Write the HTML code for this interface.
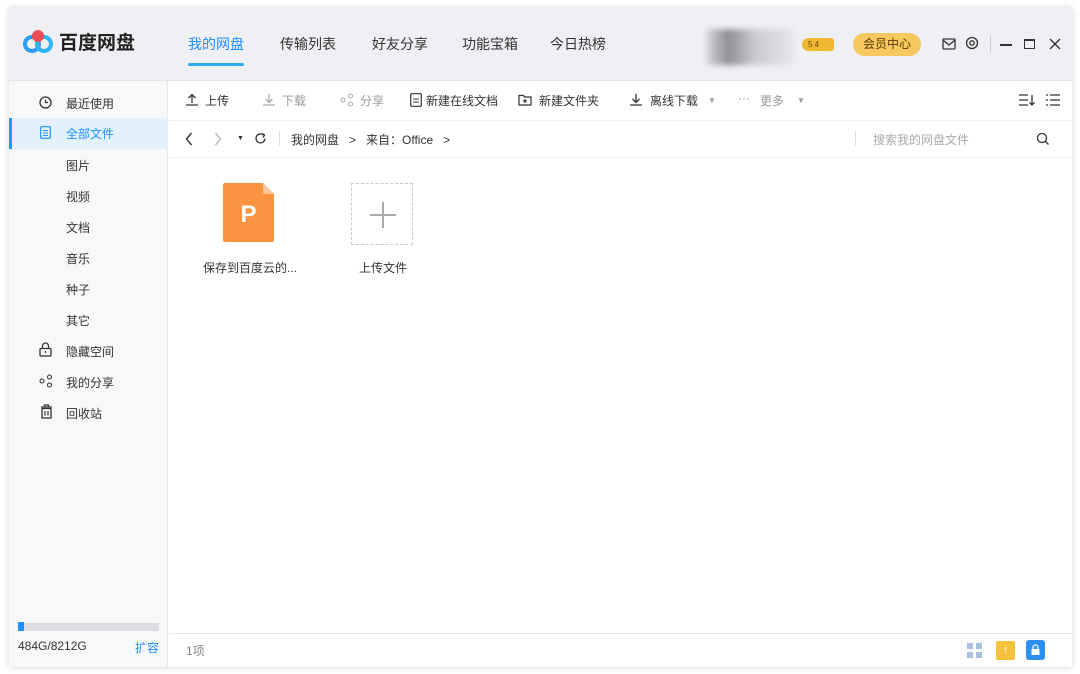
<!DOCTYPE html>
<html><head><meta charset="utf-8"><style>
*{margin:0;padding:0;box-sizing:border-box}
body{width:1080px;height:674px;background:#fff;font-family:"Liberation Sans","Noto Sans CJK SC",sans-serif;position:relative;overflow:hidden;color:#333}
.win{position:absolute;left:9px;top:8px;width:1063px;height:659px;background:#fff;box-shadow:0 0 6px rgba(0,0,0,.18);overflow:hidden}
.hdr{position:absolute;left:0;top:0;width:100%;height:73px;background:#eff0f4;border-bottom:1px solid #e2e4e8}
.abs{position:absolute;white-space:nowrap}
.tab{position:absolute;top:26px;font-size:14px;color:#333}
.side{position:absolute;left:0;top:73px;width:159px;height:586px;background:#f7f8fa;border-right:1px solid #e6e8eb}
.si{position:absolute;left:57px;font-size:12px;color:#333}
.tb{position:absolute;top:84px;font-size:12px;color:#333}
.gray{color:#999}
svg{position:absolute}
</style></head><body>
<div class="win">
<div class="hdr"></div>
<svg style="left:14px;top:20px" width="30" height="26" viewBox="0 0 30 26"><circle cx="9" cy="16" r="7" fill="none" stroke="#2f9cf0" stroke-width="4"/><circle cx="21" cy="16" r="7" fill="none" stroke="#2fb4f0" stroke-width="4"/><circle cx="15" cy="8" r="6" fill="#ef4d55"/></svg>
<div class="abs" style="left:50px;top:20px;font-size:19px;font-weight:bold;color:#222">百度网盘</div>
<div class="tab" style="left:179px;color:#1e90ff">我的网盘</div>
<div class="abs" style="left:179px;top:55px;width:56px;height:3px;background:#2fa6f0;border-radius:2px"></div>
<div class="tab" style="left:271px">传输列表</div>
<div class="tab" style="left:363px">好友分享</div>
<div class="tab" style="left:453px">功能宝箱</div>
<div class="tab" style="left:541px">今日热榜</div>
<div class="abs" style="left:697px;top:21px;width:88px;height:36px;background:linear-gradient(90deg,#d8d9dd,#8d8f95 25%,#c9cacd 55%,#e6e7ea);filter:blur(3px)"></div>
<div class="abs" style="left:793px;top:30px;width:32px;height:13px;background:#f0b830;border-radius:7px 3px 3px 7px;font-size:8px;color:#6b4a00;padding-left:6px;line-height:13px">5 4</div>
<div class="abs" style="left:844px;top:25px;width:68px;height:23px;background:#f5c860;border-radius:12px;font-size:12px;color:#5a3a00;text-align:center;line-height:23px">会员中心</div>
<svg style="left:933px;top:30px" width="14" height="12"><rect x="1" y="1" width="12" height="10" rx="1" fill="none" stroke="#333" stroke-width="1.3"/><path d="M1 2l6 5 6-5" fill="none" stroke="#333" stroke-width="1.3"/></svg>
<svg style="left:956px;top:28px" width="14" height="14"><circle cx="7" cy="7" r="5.5" fill="none" stroke="#333" stroke-width="1.3"/><circle cx="7" cy="7" r="2.2" fill="none" stroke="#333" stroke-width="1.3"/></svg>
<div class="abs" style="left:981px;top:28px;width:1px;height:16px;background:#ccc"></div>
<div class="abs" style="left:991px;top:36px;width:12px;height:1.5px;background:#333"></div>
<div class="abs" style="left:1015px;top:31px;width:11px;height:10px;border:1.5px solid #333;border-top-width:2.5px"></div>
<svg style="left:1040px;top:30px" width="12" height="12"><path d="M1 1l10 10M11 1L1 11" stroke="#333" stroke-width="1.4"/></svg>

<div class="side">
<div class="abs" style="left:0;top:37px;width:159px;height:31px;background:#e3f1fd"></div>
<div class="abs" style="left:0;top:37px;width:3px;height:31px;background:#1e9af0"></div>
</div>
<svg style="left:30px;top:88px" width="13" height="13"><circle cx="6.5" cy="6.5" r="5.5" fill="none" stroke="#333" stroke-width="1.3"/><path d="M6.5 3.5v3h2.5" fill="none" stroke="#333" stroke-width="1.3"/></svg>
<div class="si" style="top:87px">最近使用</div>
<svg style="left:31px;top:118px" width="11" height="13"><rect x=".7" y=".7" width="9.6" height="11.6" rx="1" fill="none" stroke="#1e90ff" stroke-width="1.2"/><path d="M3 4.5h5M3 7h5M3 9.5h5" stroke="#1e90ff"/></svg>
<div class="si" style="top:117px;color:#1e90ff">全部文件</div>
<div class="si" style="top:149px">图片</div>
<div class="si" style="top:180px">视频</div>
<div class="si" style="top:211px">文档</div>
<div class="si" style="top:242px">音乐</div>
<div class="si" style="top:273px">种子</div>
<div class="si" style="top:304px">其它</div>
<svg style="left:30px;top:334px" width="13" height="15"><path d="M3.5 6.5V4a3 3 0 0 1 6 0v2.5" fill="none" stroke="#333" stroke-width="1.3"/><rect x="1" y="6.5" width="11" height="7.5" rx="1" fill="none" stroke="#333" stroke-width="1.3"/><path d="M6.5 9v2" stroke="#333" stroke-width="1.3"/></svg>
<div class="si" style="top:335px">隐藏空间</div>
<svg style="left:30px;top:366px" width="14" height="14"><circle cx="3" cy="7" r="2" fill="none" stroke="#333" stroke-width="1.1"/><circle cx="10.5" cy="3" r="2" fill="none" stroke="#333" stroke-width="1.1"/><circle cx="10.5" cy="11" r="2" fill="none" stroke="#333" stroke-width="1.1"/></svg>
<div class="si" style="top:366px">我的分享</div>
<svg style="left:31px;top:396px" width="13" height="15"><path d="M1 3h11M4.5 3V1h4v2" fill="none" stroke="#333" stroke-width="1.3"/><rect x="2" y="4.5" width="9" height="9.5" fill="none" stroke="#333" stroke-width="1.3"/><path d="M5 7v4.5M8 7v4.5" stroke="#333" stroke-width="1.2"/></svg>
<div class="si" style="top:397px">回收站</div>
<div class="abs" style="left:9px;top:615px;width:141px;height:8px;background:#dcdde0"></div>
<div class="abs" style="left:9px;top:614px;width:6px;height:9px;background:#1e90ff"></div>
<div class="abs" style="left:9px;top:631px;font-size:12px;color:#333">484G/8212G</div>
<div class="abs" style="left:126px;top:631px;font-size:12px;color:#1e90ff">扩容</div>

<div class="abs" style="left:160px;top:112px;width:903px;height:1px;background:#eceef1"></div>
<div class="abs" style="left:160px;top:149px;width:903px;height:1px;background:#eceef1"></div>
<svg style="left:176px;top:85px" width="14" height="13"><path d="M7 10V1.5M3.5 5L7 1.5 10.5 5M1 12h12" fill="none" stroke="#333" stroke-width="1.3"/></svg>
<div class="tb" style="left:196px">上传</div>
<svg style="left:253px;top:85px" width="14" height="13"><path d="M7 1v8.5M3.5 6L7 9.5 10.5 6M1 12h12" fill="none" stroke="#aaa" stroke-width="1.3"/></svg>
<div class="tb gray" style="left:273px">下载</div>
<svg style="left:331px;top:85px" width="14" height="14"><circle cx="3" cy="7" r="2" fill="none" stroke="#aaa" stroke-width="1.1"/><circle cx="10.5" cy="3" r="2" fill="none" stroke="#aaa" stroke-width="1.1"/><circle cx="10.5" cy="11" r="2" fill="none" stroke="#aaa" stroke-width="1.1"/></svg>
<div class="tb gray" style="left:351px">分享</div>
<svg style="left:401px;top:85px" width="12" height="14"><rect x=".7" y=".7" width="10.6" height="12.6" rx="1" fill="none" stroke="#333" stroke-width="1.2"/><path d="M3 6h6M3 9h6" stroke="#333"/></svg>
<div class="tb" style="left:417px">新建在线文档</div>
<svg style="left:509px;top:85px" width="14" height="13"><path d="M1 2.5h4.5l1 1.5H13v8H1z" fill="none" stroke="#333" stroke-width="1.2"/><path d="M7 6v4M5 8h4" stroke="#333" stroke-width="1.2"/></svg>
<div class="tb" style="left:530px">新建文件夹</div>
<svg style="left:620px;top:85px" width="14" height="13"><path d="M7 1v8.5M3.5 6L7 9.5 10.5 6M1 12h12" fill="none" stroke="#333" stroke-width="1.3"/></svg>
<div class="tb" style="left:641px">离线下载</div>
<div class="tb gray" style="left:699px;font-size:8px;top:88px">▼</div>
<div class="tb gray" style="left:729px;top:83px">···</div>
<div class="tb gray" style="left:751px">更多</div>
<div class="tb gray" style="left:788px;font-size:8px;top:88px">▼</div>
<svg style="left:1009px;top:85px" width="18" height="14"><path d="M1 2h9M1 7h9M1 12h9M14 2v10M11.5 9.5L14 12l2.5-2.5" fill="none" stroke="#333" stroke-width="1.3"/></svg>
<svg style="left:1036px;top:85px" width="15" height="14"><path d="M5 2h10M5 7h10M5 12h10" stroke="#333" stroke-width="1.3"/><path d="M1 2h2M1 7h2M1 12h2" stroke="#333" stroke-width="1.3"/></svg>

<svg style="left:176px;top:124px" width="8" height="14"><path d="M6.5 1L1.5 7l5 6" fill="none" stroke="#333" stroke-width="1.4"/></svg>
<svg style="left:205px;top:124px" width="8" height="14"><path d="M1.5 1l5 6-5 6" fill="none" stroke="#bbb" stroke-width="1.4"/></svg>
<div class="abs" style="left:228px;top:127px;font-size:7px;color:#333">▼</div>
<svg style="left:245px;top:124px" width="13" height="13"><path d="M11 6.5A4.5 4.5 0 1 1 9.5 3" fill="none" stroke="#333" stroke-width="1.3"/><path d="M8 1.5l2.5 1.5-1.5 2.5" fill="none" stroke="#333" stroke-width="1.3"/></svg>
<div class="abs" style="left:270px;top:122px;width:1px;height:16px;background:#e0e0e0"></div>
<div class="abs" style="left:282px;top:123px;font-size:12px;color:#333">我的网盘 &nbsp; &gt; &nbsp; 来自：Office &nbsp; &gt;</div>
<div class="abs" style="left:846px;top:122px;width:1px;height:16px;background:#e0e0e0"></div>
<div class="abs" style="left:864px;top:123px;font-size:12px;color:#aaa">搜索我的网盘文件</div>
<svg style="left:1027px;top:124px" width="14" height="14"><circle cx="6" cy="6" r="4.5" fill="none" stroke="#333" stroke-width="1.3"/><path d="M9.3 9.3L12.5 12.5" stroke="#333" stroke-width="1.4"/></svg>

<svg style="left:214px;top:175px" width="51" height="59"><path d="M2 0h38l11 11v46a2 2 0 0 1-2 2H2a2 2 0 0 1-2-2V2a2 2 0 0 1 2-2z" fill="#fb9440"/><path d="M40 0v9a2 2 0 0 0 2 2h9z" fill="#fcc49a"/><text x="25.5" y="39" text-anchor="middle" font-family="Liberation Sans" font-weight="bold" font-size="24" fill="#fff">P</text></svg>
<div class="abs" style="left:194px;top:251px;font-size:12px;color:#333">保存到百度云的...</div>
<div class="abs" style="left:342px;top:175px;width:62px;height:62px;border:1px dashed #c8c8c8"></div>
<div class="abs" style="left:361px;top:206px;width:26px;height:1.5px;background:#aaa"></div>
<div class="abs" style="left:373px;top:194px;width:1.5px;height:26px;background:#aaa"></div>
<div class="abs" style="left:350px;top:251px;font-size:12px;color:#333">上传文件</div>

<div class="abs" style="left:160px;top:625px;width:903px;height:1px;background:#e6e8eb"></div>
<div class="abs" style="left:177px;top:634px;font-size:12px;color:#888">1项</div>
<svg style="left:957px;top:634px" width="18" height="18"><rect x="1" y="1" width="6" height="6" fill="#a7c0db"/><rect x="10" y="1" width="6" height="6" fill="#a7c0db"/><rect x="1" y="10" width="6" height="6" fill="#a7c0db"/><rect x="10" y="10" width="6" height="6" fill="#a7c0db"/></svg>
<div class="abs" style="left:987px;top:633px;width:19px;height:19px;background:#f5c33b;border-radius:2px;color:#fff;font-size:11px;text-align:center;line-height:19px">↑</div>
<div class="abs" style="left:1017px;top:632px;width:19px;height:20px;background:#2d8ff0;border-radius:3px"></div>
<svg style="left:1021px;top:636px" width="11" height="12"><path d="M3 5V3.5a2.5 2.5 0 0 1 5 0V5" fill="none" stroke="#fff" stroke-width="1.2"/><rect x="1.5" y="5" width="8" height="6" fill="#fff"/></svg>
</div>
</body></html>
